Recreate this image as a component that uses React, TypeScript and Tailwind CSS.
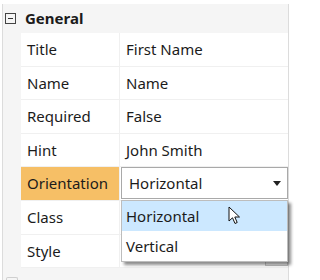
import React from "react";

const rows = [
  { label: "Title", value: "First Name" },
  { label: "Name", value: "Name" },
  { label: "Required", value: "False" },
  { label: "Hint", value: "John Smith" },
  { label: "Orientation", value: "Horizontal", active: true },
  { label: "Class", value: "" },
  { label: "Style", value: "" },
];

function Cursor() {
  return (
    <svg width="13" height="19" viewBox="0 0 13 19" className="absolute left-[228px] top-[206px] z-30">
      <path
        d="M1 1 L1 15 L4.5 11.8 L7 17.5 L9.2 16.5 L6.8 11 L11.5 11 Z"
        fill="white"
        stroke="#111"
        strokeWidth="1"
        strokeLinejoin="round"
      />
    </svg>
  );
}

export default function App() {
  return (
    <div
      className="relative w-[294px] h-[280px] overflow-hidden bg-white text-[#1b1b1b]"
      style={{ fontFamily: '"Noto Sans", "Open Sans", sans-serif' }}
    >
      <div className="mt-[4px] ml-[2px] w-[287px] h-[276px] bg-[#f5f5f5] border-l border-r border-[#dcdcdc]">
        {/* group header */}
        <div className="flex items-center h-[29px] pl-[2px]">
          <div className="w-[11px] h-[11px] border border-[#444] flex items-center justify-center">
            <div className="w-[5px] h-px bg-[#333]" />
          </div>
          <span className="ml-[9px] text-[15px] font-bold leading-none">General</span>
        </div>

        {/* property rows */}
        <div className="ml-[18px] bg-white">
          {rows.map((r) => (
            <div key={r.label} className="flex h-[33.6px] border-b border-[#f0f0f0]">
              <div
                className={
                  "w-[99px] flex items-center pl-[6px] text-[15px] border-r border-[#f0f0f0] " +
                  (r.active ? "bg-[#f6bf66]" : "")
                }
              >
                {r.label}
              </div>
              <div className="relative flex-1 flex items-center pl-[6px] text-[15px]">
                {r.active ? (
                  <>
                    <div className="absolute left-[1px] right-0 top-0 bottom-[1px] border border-[#a9a9a9] bg-white flex items-center pl-[7px] pr-[6px] z-10">
                      <span className="flex-1">Horizontal</span>
                      <svg width="8" height="5" viewBox="0 0 8 5">
                        <path d="M0 0 H8 L4 5 Z" fill="#222" />
                      </svg>
                    </div>
                    <div className="absolute left-[1px] right-0 top-[33px] z-20 bg-white border border-[#bdbdbd] shadow-[3px_3px_3px_rgba(0,0,0,0.45)]">
                      <div className="h-[30px] flex items-center pl-[4px] bg-[#cce8ff]">Horizontal</div>
                      <div className="h-[30px] flex items-center pl-[4px]">Vertical</div>
                    </div>
                  </>
                ) : (
                  r.value
                )}
                {r.label === "Style" && (
                  <div className="absolute right-0 top-[1px] bottom-[1px] w-[23px] border border-[#c8c8c8] bg-[#f0f0f0]" />
                )}
              </div>
            </div>
          ))}
        </div>

        <div className="mt-[9px] ml-[3px] w-[12px] h-[4px] border-t border-l border-r border-[#cfcfcf] rounded-t-[2px]" />
      </div>
      <Cursor />
    </div>
  );
}
